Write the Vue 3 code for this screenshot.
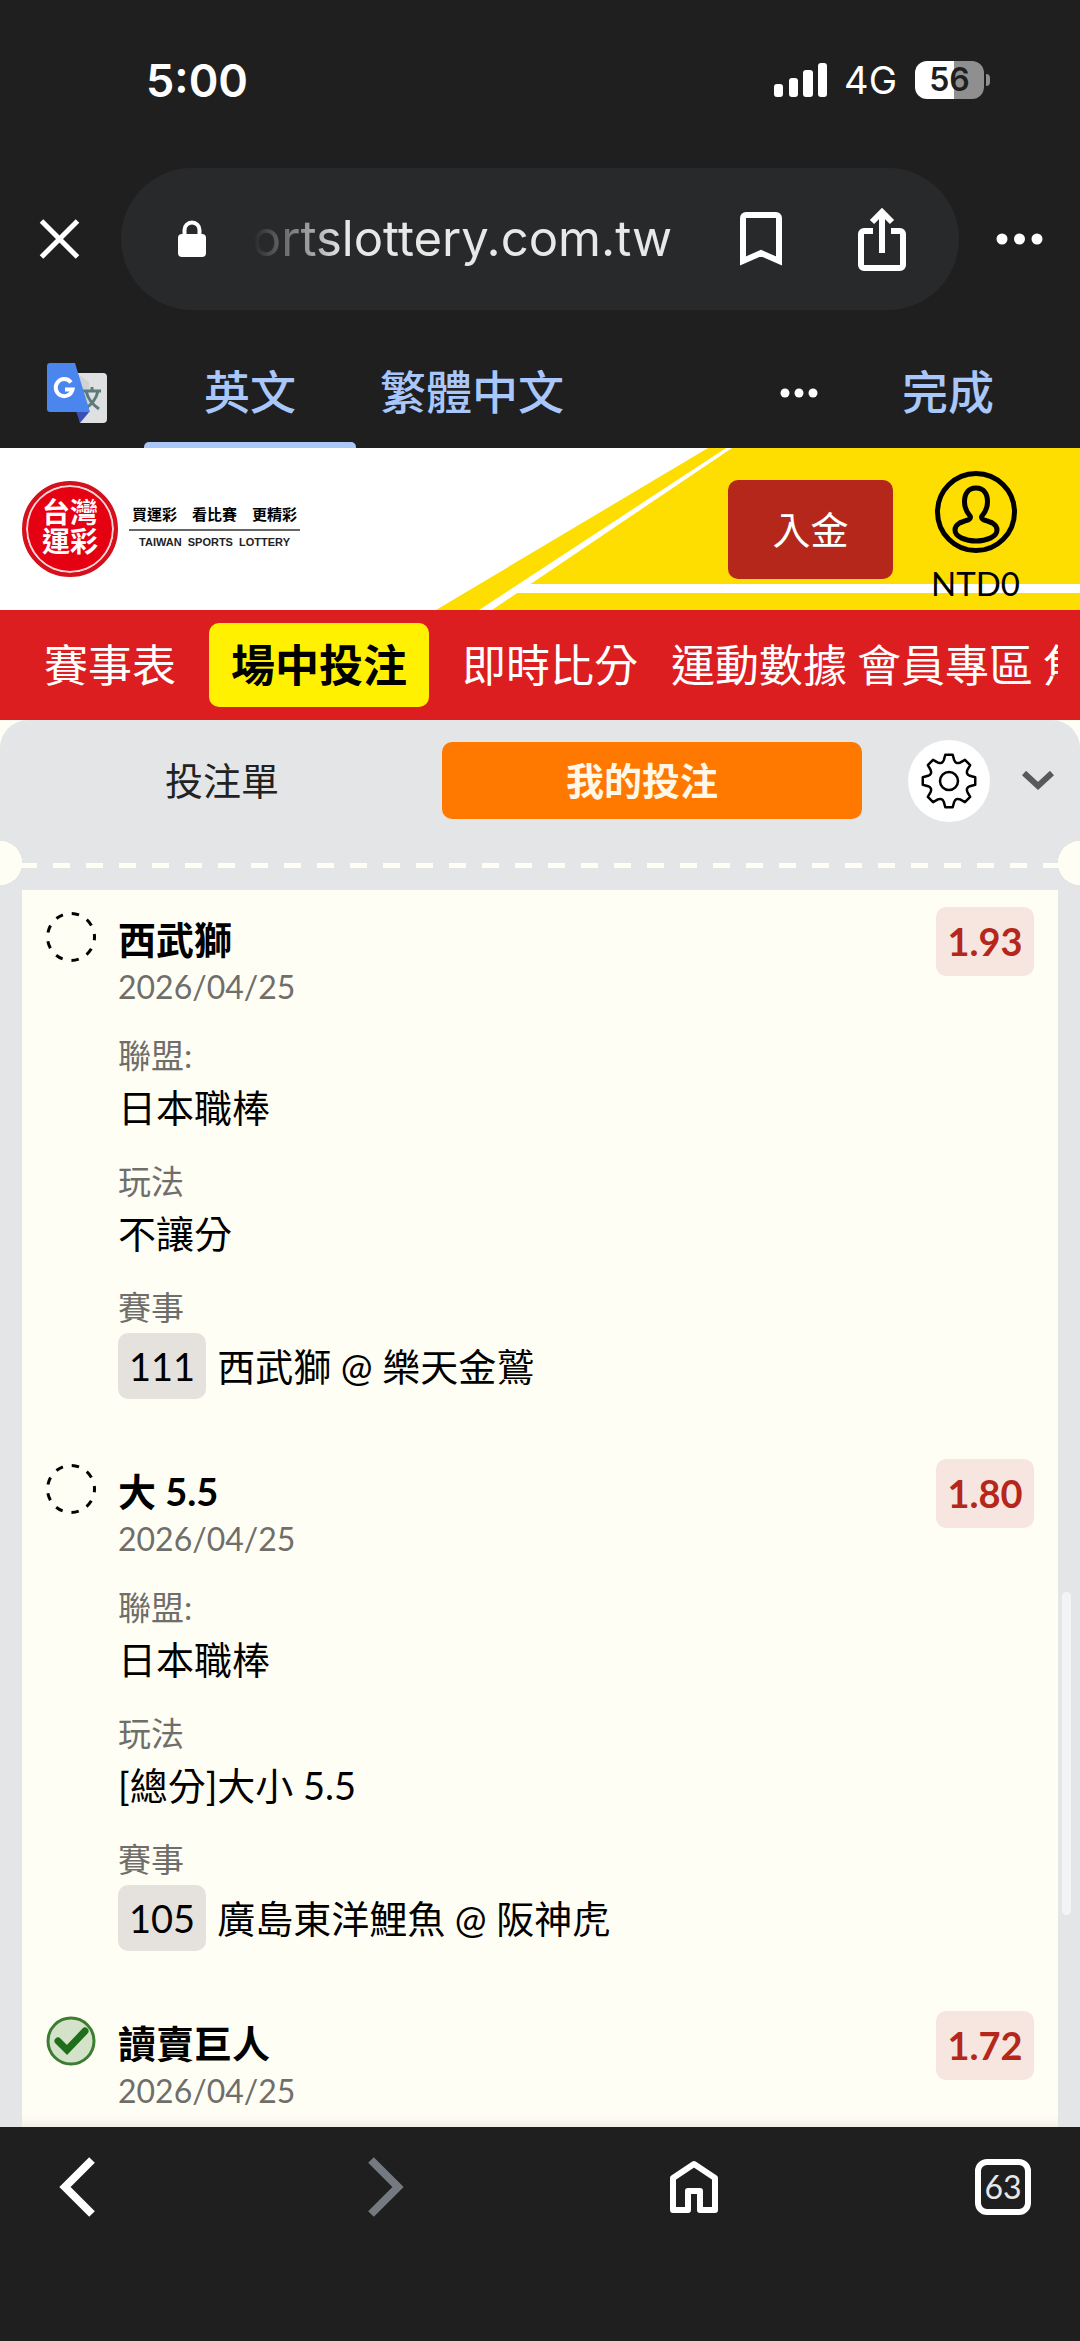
<script setup>
const navMain = [
  { label: '賽事表' },
  { label: '場中投注', active: true },
  { label: '即時比分' },
]
const navMore = ['運動數據', '會員專區', '焦點新聞']

const bets = [
  {
    pick: '西武獅', date: '2026/04/25', odds: '1.93', won: false,
    league: '日本職棒', play: '不讓分', code: '111', match: '西武獅 @ 樂天金鷲',
  },
  {
    pick: '大 5.5', date: '2026/04/25', odds: '1.80', won: false,
    league: '日本職棒', play: '[總分]大小 5.5', code: '105', match: '廣島東洋鯉魚 @ 阪神虎',
  },
  { pick: '讀賣巨人', date: '2026/04/25', odds: '1.72', won: true },
]

// Outline of an eight-toothed gear centred on the origin
const polar = (r, deg) => {
  const a = (deg * Math.PI) / 180
  return `${(r * Math.sin(a)).toFixed(2)} ${(-r * Math.cos(a)).toFixed(2)}`
}
const gearPath = Array.from({ length: 8 }, (_, k) => {
  const d = k * 45
  return `${k ? 'L' : 'M'}${polar(26.5, d - 8)} L${polar(26.5, d + 8)} L${polar(21.5, d + 14)} Q${polar(18, d + 22.5)} ${polar(21.5, d + 31)}`
}).join(' ') + 'Z'
</script>

<template>
  <div class="screen">
    <header class="chrome">
      <div class="status">
        <time class="clock">5:00</time>
        <div class="signals">
          <svg width="54" height="36" viewBox="0 0 54 36" fill="#fff" aria-hidden="true">
            <rect x="0" y="22" width="9" height="13" rx="3" />
            <rect x="15" y="16" width="9" height="19" rx="3" />
            <rect x="29" y="8" width="10" height="27" rx="3" />
            <rect x="44" y="1" width="9" height="34" rx="3" />
          </svg>
          <span class="network">4G</span>
          <span class="battery"><span class="cell">56</span><span class="tip"></span></span>
        </div>
      </div>

      <div class="toolbar">
        <button class="plain" aria-label="關閉">
          <svg width="41" height="42" viewBox="0 0 41 42" fill="none" stroke="#fff" stroke-width="5">
            <path d="M2.500 3 38.500 39M38.500 3 2.500 39" />
          </svg>
        </button>
        <div class="address">
          <svg class="lock" width="30" height="38" viewBox="0 0 30 38" aria-hidden="true">
            <rect x="1" y="14" width="28" height="23" rx="4" fill="#fff" />
            <path d="M7.500 16V10a7.500 7.500 0 0 1 15 0v6" fill="none" stroke="#fff" stroke-width="4" />
          </svg>
          <a class="url" href="#">ortslottery.com.tw</a>
          <button class="plain bookmark" aria-label="書籤">
            <svg width="42" height="54" viewBox="0 0 42 54" fill="none" stroke="#fff" stroke-width="6">
              <path d="M3 49V6a3 3 0 0 1 3-3h30a3 3 0 0 1 3 3v43l-18-8z" />
            </svg>
          </button>
          <button class="plain share" aria-label="分享">
            <svg width="50" height="64" viewBox="0 0 50 64" fill="none" stroke="#fff" stroke-width="6">
              <path d="M16 24H7a3 3 0 0 0-3 3v31a3 3 0 0 0 3 3h36a3 3 0 0 0 3-3V27a3 3 0 0 0-3-3h-9" />
              <path d="M25 46V5M15 15 25 5l10 10" />
            </svg>
          </button>
        </div>
        <button class="plain" aria-label="更多">
          <svg width="47" height="12" viewBox="0 0 47 12" fill="#fff">
            <circle cx="6" cy="6" r="5.500" /><circle cx="23.500" cy="6" r="5.500" /><circle cx="41" cy="6" r="5.500" />
          </svg>
        </button>
      </div>

      <div class="translate">
        <svg width="62" height="62" viewBox="0 0 62 62" aria-hidden="true">
          <path d="M28 11h29a4 4 0 0 1 4 4v42a4 4 0 0 1-4 4H34z" fill="#dfe0e1" />
          <path d="M30 11l13 38V20z" fill="#c5c7ca" opacity=".6" />
          <path d="M37 29h18M46 25v4M40 29c2 8 7 14 13 18M52 29c-2 9-7 14-13 18" fill="none" stroke="#5e7b7b" stroke-width="3" />
          <path d="M30 49h14L34 61z" fill="#3b4fb5" />
          <path d="M4 1h25l15 49H4a3 3 0 0 1-3-3V4a3 3 0 0 1 3-3z" fill="#4a86ee" />
          <path d="M25 20.500a8.500 8.500 0 1 0 1.500 7H19" fill="none" stroke="#fff" stroke-width="4" />
        </svg>
        <div class="langs">
          <button class="lang current">英文</button>
          <button class="lang">繁體中文</button>
        </div>
        <button class="plain" aria-label="翻譯選項">
          <svg width="38" height="10" viewBox="0 0 38 10" fill="#fff">
            <circle cx="5" cy="5" r="4.500" /><circle cx="19" cy="5" r="4.500" /><circle cx="33" cy="5" r="4.500" />
          </svg>
        </button>
        <button class="done">完成</button>
      </div>
    </header>

    <main class="web">
      <div class="banner">
        <svg class="stripes" viewBox="0 0 1080 162" preserveAspectRatio="xMaxYMid slice" aria-hidden="true">
          <path d="M708 0H1080V162H436z" fill="#fedd00" />
          <path d="M726 0h6L492 162H479z" fill="#fff" />
          <path d="M530 136H1080v9H517z" fill="#fff" />
        </svg>
        <a class="brand" href="#">
          <span class="seal"><span>台灣</span><span>運彩</span></span>
          <span class="motto">
            <span class="motto-zh">買運彩　看比賽　更精彩</span>
            <span class="motto-en">TAIWAN&nbsp; SPORTS&nbsp; LOTTERY</span>
          </span>
        </a>
        <div class="account">
          <button class="deposit">入金</button>
          <a class="user" href="#">
            <svg width="82" height="82" viewBox="0 1 82 82" fill="none" stroke="#000" stroke-width="5" aria-hidden="true">
              <circle cx="41" cy="42" r="38.500" />
              <path d="M41 18c-8 0-11.500 6-11.500 14 0 7 3 11 5.500 14 1 1.500 0 3-2 4-7 2-13 4-13 10 0 7 11 11 21 11s21-4 21-11c0-6-6-8-13-10-2-1-3-2.500-2-4 2.500-3 5.500-7 5.500-14 0-8-3.500-14-11.500-14z" />
            </svg>
            <span>NTD0</span>
          </a>
        </div>
      </div>

      <nav class="nav">
        <div class="nav-main">
          <a v-for="n in navMain" :key="n.label" href="#" :class="{ active: n.active }">{{ n.label }}</a>
        </div>
        <div class="nav-more">
          <a v-for="n in navMore" :key="n" href="#">{{ n }}</a>
        </div>
      </nav>

      <section class="slip">
        <div class="slip-head">
          <button class="tab">投注單</button>
          <button class="tab selected">我的投注</button>
          <button class="gear" aria-label="設定">
            <svg width="58" height="58" viewBox="-29 -29 58 58" fill="none" stroke="#000" stroke-width="2.500" stroke-linejoin="round">
              <path :d="gearPath" />
              <circle r="9" />
            </svg>
          </button>
          <button class="plain fold" aria-label="收合">
            <svg width="32" height="20" viewBox="0 0 32 20" fill="none" stroke="#58595b" stroke-width="6">
              <path d="M2 2 16 15 30 2" />
            </svg>
          </button>
        </div>

        <div class="perforation"></div>

        <div class="bets">
          <article v-for="b in bets" :key="b.pick" class="bet">
            <svg class="state" width="50" height="50" viewBox="0 0 50 50" fill="none" aria-hidden="true">
              <template v-if="b.won">
                <circle cx="25" cy="25" r="23" fill="#d3e2c9" stroke="#3c7d32" stroke-width="3" />
                <path d="M12 25l9 9L39 15" stroke="#1f6e1b" stroke-width="7" stroke-linecap="round" />
              </template>
              <circle v-else cx="25" cy="25" r="23.500" stroke="#000" stroke-width="3" stroke-dasharray="7.400 9" stroke-dashoffset="4" />
            </svg>
            <div class="detail">
              <h2>{{ b.pick }}</h2>
              <time>{{ b.date }}</time>
              <dl v-if="b.code">
                <dt>聯盟:</dt>
                <dd>{{ b.league }}</dd>
                <dt>玩法</dt>
                <dd>{{ b.play }}</dd>
                <dt>賽事</dt>
                <dd class="match"><span class="code">{{ b.code }}</span>{{ b.match }}</dd>
              </dl>
            </div>
            <span class="odds">{{ b.odds }}</span>
          </article>
        </div>
        <span class="thumb"></span>
      </section>
    </main>

    <footer class="bottom">
      <button class="plain" aria-label="上一頁">
        <svg width="36" height="60" viewBox="0 0 36 60" fill="none" stroke="#fff" stroke-width="8">
          <path d="M33 3 6 30l27 27" />
        </svg>
      </button>
      <button class="plain" aria-label="下一頁">
        <svg width="36" height="60" viewBox="0 0 36 60" fill="none" stroke="#747a80" stroke-width="8">
          <path d="M3 3l27 27L3 57" />
        </svg>
      </button>
      <button class="plain" aria-label="首頁">
        <svg width="50" height="54" viewBox="0 0 50 54" fill="none" stroke="#fff" stroke-width="6" stroke-linejoin="round">
          <path d="M4 18 25 4l21 14v32H31V31H19v19H4z" />
        </svg>
      </button>
      <button class="count">63</button>
    </footer>
  </div>
</template>

<style>
body {
  background: #1f1f1f;
}
</style>

<style scoped>
.screen {
  min-height: 100vh;
  display: flex;
  flex-direction: column;
  overflow: hidden;
  background: #1f1f1f;
  color: #000;
  font-family: Lato, "Noto Sans CJK TC", sans-serif;
}
.screen * {
  box-sizing: border-box;
}
button {
  border: 0;
  padding: 0;
  margin: 0;
  background: none;
  color: inherit;
  font-family: inherit;
}
a {
  color: inherit;
  text-decoration: none;
}
svg {
  display: block;
  flex: none;
}
.plain {
  flex: none;
}

/* Browser chrome */
.status {
  height: 168px;
  padding: 0 90px 8px 146px;
  display: flex;
  align-items: center;
  justify-content: space-between;
  color: #fff;
  font-family: Inter, sans-serif;
}
.clock {
  font-size: 45px;
  font-weight: 600;
}
.signals {
  display: flex;
  align-items: center;
}
.network {
  margin: 0 18px 0 16px;
  font-size: 38px;
}
.battery {
  display: flex;
  align-items: center;
  gap: 2px;
}
.cell {
  width: 69px;
  height: 38px;
  border-radius: 12px;
  background: linear-gradient(to right, #fff 56%, #8f8f8f 56%);
  color: #1f1f1f;
  font-size: 32px;
  font-weight: 600;
  line-height: 38px;
  text-align: center;
}
.tip {
  width: 4px;
  height: 12px;
  border-radius: 0 6px 6px 0;
  background: #8f8f8f;
}
.toolbar {
  padding: 0 37px 0 39px;
  display: flex;
  align-items: center;
}
.address {
  flex: 1;
  min-width: 0;
  height: 142px;
  margin: 0 37px 0 41px;
  padding: 0 52px 0 56px;
  border-radius: 71px;
  background: #28292b;
  display: flex;
  align-items: center;
}
.url {
  flex: 1;
  min-width: 0;
  margin: 0 68px 0 46px;
  display: flex;
  justify-content: flex-end;
  overflow: hidden;
  color: #e8e8e8;
  font-family: Inter, sans-serif;
  font-size: 49px;
  line-height: 64px;
  -webkit-mask-image: linear-gradient(to right, transparent, #000 90px);
  mask-image: linear-gradient(to right, transparent, #000 90px);
}
.bookmark {
  margin-right: 75px;
}
.translate {
  height: 138px;
  padding: 28px 86px 0 46px;
  display: flex;
  align-items: center;
  color: #a9c7fa;
}
.langs {
  flex: 1;
  height: 100%;
  margin-left: 36px;
  display: flex;
}
.lang,
.done {
  padding-bottom: 2px;
  font-size: 46px;
  font-weight: 500;
  line-height: 60px;
}
.lang {
  position: relative;
  padding-left: 24px;
  padding-right: 24px;
}
.lang.current {
  padding-left: 60px;
  padding-right: 60px;
}
.lang.current::after {
  content: "";
  position: absolute;
  inset: auto 0 0;
  height: 6px;
  border-radius: 5px 5px 0 0;
  background: #abc7f5;
}
.done {
  margin-left: 84px;
}

/* Site banner */
.web {
  flex: 1;
  display: flex;
  flex-direction: column;
  background: #fffef5;
}
.banner {
  position: relative;
  height: 162px;
  padding: 0 60px 0 22px;
  display: flex;
  justify-content: space-between;
  background: #fff;
}
.stripes {
  position: absolute;
  inset: 0;
  width: 100%;
  height: 100%;
}
.brand {
  position: relative;
  display: flex;
  align-items: center;
  gap: 11px;
}
.seal {
  width: 96px;
  height: 96px;
  padding-bottom: 4px;
  border: 4px solid #d5101d;
  border-radius: 50%;
  background: #e50012;
  box-shadow: inset 0 0 0 2px #fbd5d5;
  display: flex;
  flex-direction: column;
  align-items: center;
  justify-content: center;
  color: #fff;
  font-size: 28px;
  font-weight: 700;
  line-height: 29px;
}
.motto {
  display: flex;
  flex-direction: column;
  text-align: center;
}
.motto-zh {
  padding: 0 3px 2px;
  border-bottom: 2px solid #666;
  font-size: 15px;
  font-weight: 700;
  line-height: 26px;
}
.motto-en {
  padding-bottom: 4px;
  color: #222;
  font-family: "Liberation Sans", sans-serif;
  font-size: 11px;
  font-weight: 700;
  line-height: 22px;
}
.account {
  position: relative;
  display: flex;
  align-items: center;
  gap: 38px;
}
.deposit {
  width: 165px;
  height: 99px;
  padding-bottom: 4px;
  border-radius: 10px;
  background: #b5271b;
  color: #fff;
  font-size: 38px;
}
.user {
  display: flex;
  flex-direction: column;
  align-items: center;
  padding-top: 16px;
  font-size: 33px;
  line-height: 40px;
}
.user span {
  margin-top: 10px;
}

/* Site navigation */
.nav {
  height: 110px;
  margin-right: 22px;
  padding-left: 44px;
  display: flex;
  align-items: center;
  gap: 33px;
  overflow: hidden;
  background: #dc1e20;
  box-shadow: 22px 0 #dc1e20;
  color: #fff;
  font-size: 44px;
  line-height: 84px;
  white-space: nowrap;
}
.nav-main,
.nav-more {
  flex: none;
  display: flex;
}
.nav-main {
  gap: 33px;
}
.nav-more {
  gap: 10px;
}
.nav .active {
  padding: 0 22px;
  border-radius: 10px;
  background: #fff100;
  color: #000;
  font-weight: 700;
}

/* Bet slip */
.slip {
  position: relative;
  flex: 1;
  display: flex;
  flex-direction: column;
  border-radius: 28px 28px 0 0;
  background: #e3e5e7;
}
.slip-head {
  padding: 22px 26px 22px 22px;
  display: flex;
  align-items: center;
}
.tab {
  flex: 1;
  height: 77px;
  padding: 0 20px 4px 0;
  border-radius: 10px;
  color: #222;
  font-size: 38px;
}
.tab.selected {
  background: #ff7900;
  color: #fff8e8;
  font-weight: 700;
}
.gear {
  width: 82px;
  height: 82px;
  margin: -3px 32px -3px 46px;
  border-radius: 50%;
  background: #fff;
  display: flex;
  align-items: center;
  justify-content: center;
}
.perforation {
  height: 44px;
  margin-bottom: 5px;
  background:
    radial-gradient(circle at 0 50%, #fffef5 22px, transparent 22px) left / 22px 100% no-repeat,
    radial-gradient(circle at 100% 50%, #fffef5 22px, transparent 22px) right / 22px 100% no-repeat,
    repeating-linear-gradient(to right, #fffef5 0 4px, transparent 4px 20px, #fffef5 20px 33px) 0 22px / 100% 5px no-repeat;
}
.bets {
  flex: 1;
  margin: 0 22px;
  background: #fffef5;
  box-shadow: inset 0 -16px 14px -14px #e9e6df;
}
.bet {
  padding: 17px 24px 43px;
  display: flex;
  align-items: flex-start;
}
.bet:last-child {
  padding-bottom: 0;
}
.state {
  margin: 5px 22px 0 0;
}
.detail {
  flex: 1;
  padding-top: 8px;
}
h2 {
  margin: 0;
  font-size: 38px;
  font-weight: 700;
  line-height: 48px;
}
.detail time {
  display: block;
  color: #6f6e6a;
  font-size: 32px;
  line-height: 48px;
}
dl {
  margin: 0;
}
dt {
  margin-top: 22px;
  color: #6f6e6a;
  font-size: 33px;
  line-height: 44px;
}
dd {
  margin: 0;
  font-size: 38px;
  line-height: 60px;
}
.match {
  display: flex;
  align-items: center;
  gap: 11px;
  padding-top: 4px;
}
.code {
  padding: 0 11px;
  border-radius: 10px;
  background: #e5e2dd;
  line-height: 66px;
}
.odds {
  width: 98px;
  border-radius: 10px;
  background: #f7e6e0;
  color: #b5271b;
  font-size: 38px;
  font-weight: 700;
  line-height: 69px;
  text-align: center;
}
.thumb {
  position: absolute;
  top: 872px;
  right: 9px;
  width: 9px;
  height: 323px;
  border-radius: 5px;
  background: #f3f4f5;
}

/* Browser bottom bar */
.bottom {
  height: 214px;
  padding: 30px 49px 0;
  display: flex;
  align-items: flex-start;
  justify-content: space-between;
}
.bottom .plain {
  width: 56px;
  height: 60px;
  display: flex;
  align-items: center;
  justify-content: center;
}
.count {
  width: 56px;
  height: 56px;
  margin-top: 2px;
  border: 6px solid #fff;
  border-radius: 12px;
  color: #e8e8e8;
  font-size: 32px;
  line-height: 44px;
}
</style>
